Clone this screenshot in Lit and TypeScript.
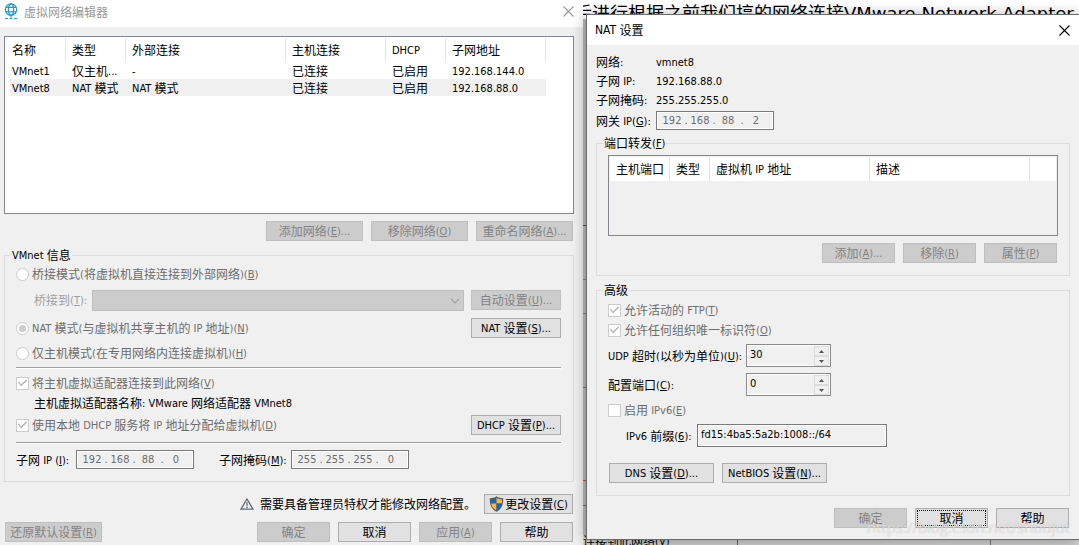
import { LitElement, html, css, nothing, TemplateResult } from "lit";
import { customElement, state } from "lit/decorators.js";

/** Splits a caption into CJK and Latin runs; "&X" marks the access key. */
function caption(text: string): TemplateResult[] {
  const runs = text.match(/[\x20-\x7e]+|[^\x20-\x7e]+/g) ?? [];
  return runs.map((run) => {
    if (!/[\x20-\x7e]/.test(run)) return html`${run}`;
    const at = run.indexOf("&");
    if (at < 0) return html`<span class="latin">${run}</span>`;
    return html`<span class="latin">${run.slice(0, at)}<u>${run[at + 1]}</u>${run.slice(at + 2)}</span>`;
  });
}

interface Network {
  name: string;
  type: string;
  external: string;
  host: string;
  dhcp: string;
  subnet: string;
}

@customElement("app-root")
export class AppRoot extends LitElement {
  @state() private selected = 1;

  private networks: Network[] = [
    { name: "VMnet1", type: "仅主机...", external: "-", host: "已连接", dhcp: "已启用", subnet: "192.168.144.0" },
    { name: "VMnet8", type: "NAT 模式", external: "NAT 模式", host: "已连接", dhcp: "已启用", subnet: "192.168.88.0" },
  ];

  static styles = css`
    :host {
      display: block;
      position: relative;
      overflow: hidden;
      height: 100vh;
      background: #b0b0b0;
      color: #000;
      font: 12px/16px "Noto Sans CJK SC", sans-serif;
    }
    * { box-sizing: border-box; }
    button, input, select { font: inherit; color: inherit; margin: 0; }
    .latin {
      font-family: "DejaVu Sans Condensed", "DejaVu Sans", sans-serif;
      font-size: 11px;
      line-height: 11px;
      vertical-align: 1px;
      white-space: pre;
    }
    u { text-underline-offset: 1px; }

    /* page behind the dialogs */
    .page {
      position: absolute;
      inset: 0;
      display: flex;
      flex-direction: column;
      justify-content: space-between;
      align-items: flex-end;
      overflow: hidden;
      background:
        linear-gradient(#c66, #c66) 0 279px / 100% 1px no-repeat,
        linear-gradient(#c66, #c66) 0 313px / 100% 1px no-repeat,
        linear-gradient(#c44, #c44) 0 480px / 100% 1px no-repeat,
        linear-gradient(#c44, #c44) 0 505px / 100% 1px no-repeat,
        linear-gradient(#555, #555) 0 225px / 100% 1px no-repeat,
        linear-gradient(#777, #777) 0 387px / 100% 1px no-repeat,
        #bbb;
    }
    .page p { margin: 0; white-space: nowrap; overflow: hidden; }
    .headline {
      width: 505px;
      height: 19px;
      background: #fff;
      font-size: 18px;
      line-height: 24px;
    }
    .headline span { font-family: "DejaVu Sans", sans-serif; }
    .tail {
      width: 496px;
      height: 10px;
      line-height: 12px;
      background: linear-gradient(#c33, #c33) 154px 0 / 1px 100% no-repeat,
        linear-gradient(#777, #777) 407px 0 / 1px 100% no-repeat, #d8d8d8;
    }

    .desktop {
      position: relative;
      display: grid;
      grid-template-columns: minmax(0, 1fr) 493px;
      column-gap: 3px;
      align-items: start;
    }
    .window { background: #f0f0f0; }
    .editor { min-height: 100vh; }
    .nat {
      position: relative;
      margin-top: 14px;
      border: 1px solid #6b6b6b;
      border-right: 0;
      box-shadow: 0 2px 14px rgba(0, 0, 0, 0.35);
    }
    .titlebar {
      display: flex;
      align-items: center;
      background: #fff;
      height: 27px;
      padding: 0 9px 4px 4px;
      color: #999;
    }
    .titlebar h1 { flex: 1; margin: 0 0 0 5px; font-size: 12px; font-weight: 400; line-height: 16px; }
    .titlebar .latin { font-size: 12px; }
    .nat .titlebar { height: 30px; padding: 0 9px 0 3px; color: #000; }
    .close { display: block; border: 0; padding: 0; background: none; width: 11px; height: 11px; }
    .close svg, .globe { display: block; }
    .body { padding: 9px 9px 3px 4px; }
    .nat .body { padding: 7px 9px 11px; }

    .list { border: 1px solid #828790; background: #fff; }
    .editor .list { height: 178px; padding: 1px 0 0 5px; }
    .nat .list { height: 81px; padding: 1px; background: none; }
    table { border-collapse: collapse; table-layout: fixed; }
    th, td { padding: 0 0 0 6px; text-align: left; font-weight: 400; white-space: nowrap; overflow: hidden; line-height: 16px; }
    th { height: 24px; box-shadow: inset -1px 0 #e5e5e5; }
    .editor th:first-child, .editor td:first-child { padding-left: 2px; }
    td { height: 17px; }
    .picked td { background: #f0f0f0; }
    .nat table { width: 100%; background: #fff; }
    .nat th:last-child { box-shadow: none; }

    .row { display: flex; align-items: center; }
    .end { justify-content: flex-end; gap: 8px; padding-right: 1px; }
    .push { flex: 1; }
    .btn {
      display: flex;
      align-items: center;
      justify-content: center;
      height: 20px;
      padding: 0;
      border: 1px solid #adadad;
      background: #e1e1e1;
      white-space: nowrap;
    }
    .btn:disabled { background: #ccc; border-color: #bfbfbf; color: #838383; }
    .w73 { width: 73px; }
    .w90 { width: 90px; }
    .w97 { width: 97px; }
    .w105 { width: 105px; }
    .focused { outline: 1px dotted #000; outline-offset: -3px; }
    .toolbar { margin-top: 7px; }

    fieldset { margin: 6px 0 0; padding: 0 11px 12px; border: 1px solid #dcdcdc; min-width: 0; }
    .editor fieldset { padding: 1px 12px 12px 11px; }
    legend { margin-left: -5px; padding: 0 1px; height: 16px; }
    .nat .ports { margin-top: 5px; padding-top: 4px; }

    .option { display: flex; align-items: center; height: 20px; gap: 3px; color: #6d6d6d; white-space: nowrap; }
    .option input {
      appearance: none;
      display: grid;
      place-items: center;
      width: 13px;
      height: 13px;
      border: 1px solid #ccc;
      background: #fff;
    }
    .option input[type="radio"] { border-radius: 50%; }
    .option input[type="radio"]:checked::after { content: ""; width: 7px; height: 7px; border-radius: 50%; background: #ccc; }
    .option input[type="checkbox"]:checked::after {
      content: "";
      width: 11px;
      height: 11px;
      background: #b4b4b4;
      clip-path: polygon(1px 5px, 2px 4px, 4px 7px, 9px 2px, 10px 3px, 4px 9px);
    }
    .bridge { margin: 6px 0 7px; height: 21px; gap: 7px; align-items: flex-start; }
    .bridge label { width: 69px; padding: 2px 0 0 18px; color: #a0a0a0; white-space: nowrap; }
    .combo { position: relative; flex: 1; display: grid; }
    .combo select { appearance: none; height: 21px; border: 1px solid #bfbfbf; border-radius: 0; background: #ccc; opacity: 1; }
    .combo svg { position: absolute; right: 4px; top: 8px; pointer-events: none; }
    .hostonly { margin-top: 5px; }
    hr { margin: 4px 0; height: 2px; border: 0; border-top: 1px solid #a0a0a0; background: #fff; }
    .adapter { margin: 0 0 3px; padding-left: 18px; line-height: 19px; }
    .low { margin: 7px 0 6px; }

    .ip {
      display: flex;
      align-items: center;
      width: 118px;
      height: 19px;
      padding-left: 3px;
      border: 1px solid #7a7a7a;
      box-shadow: inset 0 0 0 1px #fff;
      color: #6d6d6d;
      font-family: "DejaVu Sans Condensed", "DejaVu Sans", sans-serif;
      font-size: 11px;
    }
    .ip input { width: 24px; height: 15px; padding: 0; border: 0; background: none; text-align: center; }
    .ip i { width: 4px; font-style: normal; text-align: center; }
    .addr label { width: 60px; white-space: nowrap; }
    .addr .mask { width: 72px; margin-left: 25px; }

    .notice { margin-top: 12px; padding-right: 1px; justify-content: flex-end; white-space: nowrap; }
    .notice svg { display: block; flex: none; }
    .notice .text { margin: 0 8px 0 6px; }
    .admin { width: 89px; gap: 1px; }
    .bottom { margin-top: 8px; gap: 8px; padding: 0 1px; }

    .info { display: grid; grid-template-columns: 60px 1fr; line-height: 19px; margin: 0 0 2px; }
    .info dd { margin: 0; }
    .gateway label { width: 60px; white-space: nowrap; }
    .advanced .option:first-of-type { margin-top: 2px; }
    .num { height: 23px; margin: 4px 0 6px; }
    .num label { width: 138px; white-space: nowrap; }
    .port { margin: 0 0 4px; }
    .spin { display: flex; width: 85px; height: 23px; border: 1px solid #8a8a8a; box-shadow: inset 0 0 0 1px #fff; }
    .spin input, .prefix input {
      font-family: "DejaVu Sans Condensed", "DejaVu Sans", sans-serif;
      font-size: 11px;
      border: 0;
      background: none;
      padding: 0 0 2px 3px;
      min-width: 0;
    }
    .spin input { flex: 1; width: 0; }
    .arrows { display: grid; grid-template-rows: 10px 10px; width: 16px; padding: 1px 1px 0 0; }
    .arrows button { display: grid; place-items: center; padding: 0; border: 1px solid #dcdcdc; background: #f0f0f0; }
    .arrows svg { display: block; }
    .prefix { margin: 4px 0 16px; height: 23px; }
    .prefix label { width: 89px; padding-left: 18px; white-space: nowrap; }
    .prefix input { width: 190px; height: 23px; border: 1px solid #7a7a7a; box-shadow: inset 0 0 0 1px #fff; }
    .more { gap: 8px; padding-left: 1px; }
    .confirm { margin-top: 12px; }
    .watermark {
      position: absolute;
      right: 9px;
      bottom: 8px;
      font: 15px/20px "Open Sans", sans-serif;
      color: rgba(255, 255, 255, 0.65);
      text-shadow: 0 0 1px rgba(0, 0, 0, 0.25);
      pointer-events: none;
    }
  `;

  private close(color: string, name: string) {
    return html`<button class="close" aria-label=${name}>
      <svg width="11" height="11" viewBox="0 0 11 11" stroke=${color} stroke-width="1.1" fill="none"><path d="M.5.5l10 10M10.5.5l-10 10" /></svg>
    </button>`;
  }

  private button(text: string, cls: string, disabled = false) {
    return html`<button class="btn ${cls}" ?disabled=${disabled}><span>${caption(text)}</span></button>`;
  }

  private ip(id: string, parts: string[]) {
    return html`<div class="ip" role="group">
      ${parts.map(
        (p, i) => html`${i ? html`<i>.</i>` : nothing}<input id=${i ? `${id}-${i}` : id} aria-label=${i ? `${id} ${i + 1}` : nothing} .value=${p} maxlength="3" disabled />`
      )}
    </div>`;
  }

  private option(type: "radio" | "checkbox", text: string, checked: boolean, cls = "") {
    return html`<label class="option ${cls}"><input type=${type} name=${type === "radio" ? "mode" : nothing} .checked=${checked} disabled /><span>${caption(text)}</span></label>`;
  }

  private spin(id: string, value: string) {
    return html`<div class="spin">
      <input id=${id} .value=${value} />
      <div class="arrows">
        <button aria-label="+"><svg width="5" height="3" fill="#555"><path d="M0 3L2.5 0 5 3z" /></svg></button>
        <button aria-label="-"><svg width="5" height="3" fill="#555"><path d="M0 0L2.5 3 5 0z" /></svg></button>
      </div>
    </div>`;
  }

  private editor() {
    return html`<section class="window editor">
      <header class="titlebar">
        <svg class="globe" width="15" height="17" viewBox="0 0 15 17" fill="none" stroke="#1b9bd0" stroke-width="1.2">
          <circle cx="7" cy="6.6" r="5.7" />
          <ellipse cx="7" cy="6.6" rx="2.6" ry="5.7" />
          <path d="M1.8 4.4h10.4M1.8 8.8h10.4M7 12.3v2.2" />
          <path d="M1 15.5h3M5.5 15.5h3M10 15.5h3" stroke="#2aa8a0" />
        </svg>
        <h1>虚拟网络编辑器</h1>
        ${this.close("#999", "关闭")}
      </header>
      <div class="body">
        <div class="list">
          <table>
            <colgroup>
              <col style="width:56px" /><col style="width:60px" /><col style="width:160px" />
              <col style="width:100px" /><col style="width:60px" /><col style="width:100px" />
            </colgroup>
            <thead>
              <tr>${["名称", "类型", "外部连接", "主机连接", "DHCP", "子网地址"].map((h) => html`<th>${caption(h)}</th>`)}</tr>
            </thead>
            <tbody>
              ${this.networks.map(
                (n, i) => html`<tr class=${i === this.selected ? "picked" : ""} @click=${() => (this.selected = i)}>
                  ${[n.name, n.type, n.external, n.host, n.dhcp, n.subnet].map((v) => html`<td>${caption(v)}</td>`)}
                </tr>`
              )}
            </tbody>
          </table>
        </div>
        <div class="row end toolbar">
          ${this.button("添加网络(&E)...", "w97", true)}${this.button("移除网络(&O)", "w97", true)}${this.button("重命名网络(&A)...", "w97", true)}
        </div>
        <fieldset>
          <legend>${caption("VMnet 信息")}</legend>
          ${this.option("radio", "桥接模式(将虚拟机直接连接到外部网络)(&B)", false)}
          <div class="row bridge">
            <label for="bridge">${caption("桥接到(&T):")}</label>
            <div class="combo">
              <select id="bridge" disabled></select>
              <svg width="10" height="6" viewBox="0 0 10 6" fill="none" stroke="#a0a0a0" stroke-width="1.2"><path d="M1 .8l4 4 4-4" /></svg>
            </div>
            ${this.button("自动设置(&U)...", "w90", true)}
          </div>
          <div class="row">
            ${this.option("radio", "NAT 模式(与虚拟机共享主机的 IP 地址)(&N)", true)}
            <span class="push"></span>${this.button("NAT 设置(&S)...", "w90")}
          </div>
          ${this.option("radio", "仅主机模式(在专用网络内连接虚拟机)(&H)", false, "hostonly")}
          <hr />
          ${this.option("checkbox", "将主机虚拟适配器连接到此网络(&V)", true)}
          <p class="adapter">${caption("主机虚拟适配器名称: VMware 网络适配器 VMnet8")}</p>
          <div class="row">
            ${this.option("checkbox", "使用本地 DHCP 服务将 IP 地址分配给虚拟机(&D)", true)}
            <span class="push"></span>${this.button("DHCP 设置(&P)...", "w90")}
          </div>
          <hr class="low" />
          <div class="row addr">
            <label for="subnet">${caption("子网 IP (&I):")}</label>${this.ip("subnet", ["192", "168", "88", "0"])}
            <label class="mask" for="mask">${caption("子网掩码(&M):")}</label>${this.ip("mask", ["255", "255", "255", "0"])}
          </div>
        </fieldset>
        <div class="row notice">
          <svg width="14" height="12" viewBox="0 0 14 12" fill="none" stroke="#5c6c78" stroke-width="1.3">
            <path d="M7 1L13 11.2H1z" /><path d="M7 4.3v3.4M7 8.6v1.3" />
          </svg>
          <span class="text">需要具备管理员特权才能修改网络配置。</span>
          <button class="btn admin">
            <svg width="15" height="16" viewBox="0 0 15 16">
              <path d="M7.5 .3C5.6 1.8 3.4 2.3.8 2.2 .6 8 1.8 13 7.5 15.7 13.2 13 14.4 8 14.2 2.2 11.6 2.3 9.4 1.8 7.5.3z" fill="#555" />
              <path d="M7.5 1.700C5.500 2.900 4 3.300 2 3.300V7.500h5.500z" fill="#1467c4" />
              <path d="M7.500 1.700c2 1.200 3.500 1.600 5.500 1.600V7.500H7.500z" fill="#fdb62f" />
              <path d="M2.100 7.500h5.400v6.900C4.200 12.700 2.600 10.600 2.100 7.500z" fill="#fdb62f" />
              <path d="M12.900 7.500H7.500v6.900c3.300-1.700 4.900-3.800 5.400-6.900z" fill="#1467c4" />
            </svg>
            <span>${caption("更改设置(&C)")}</span>
          </button>
        </div>
        <div class="row bottom">
          ${this.button("还原默认设置(&R)", "w97", true)}<span class="push"></span>
          ${this.button("确定", "w73", true)}${this.button("取消", "w73")}${this.button("应用(&A)", "w73", true)}${this.button("帮助", "w73")}
        </div>
      </div>
    </section>`;
  }

  private nat() {
    return html`<section class="window nat">
      <header class="titlebar"><h1>${caption("NAT 设置")}</h1>${this.close("#000", "关闭")}</header>
      <div class="body">
        <dl class="info">
          <dt>${caption("网络:")}</dt><dd>${caption("vmnet8")}</dd>
          <dt>${caption("子网 IP:")}</dt><dd>${caption("192.168.88.0")}</dd>
          <dt>${caption("子网掩码:")}</dt><dd>${caption("255.255.255.0")}</dd>
        </dl>
        <div class="row gateway">
          <label for="gateway">${caption("网关 IP(&G):")}</label>${this.ip("gateway", ["192", "168", "88", "2"])}
        </div>
        <fieldset class="ports">
          <legend>${caption("端口转发(&F)")}</legend>
          <div class="list">
            <table>
              <colgroup><col style="width:60px" /><col style="width:40px" /><col style="width:160px" /><col style="width:160px" /><col /></colgroup>
              <thead><tr>${["主机端口", "类型", "虚拟机 IP 地址", "描述", ""].map((h) => html`<th>${caption(h)}</th>`)}</tr></thead>
            </table>
          </div>
          <div class="row end toolbar">
            ${this.button("添加(&A)...", "w73", true)}${this.button("移除(&R)", "w73", true)}${this.button("属性(&P)", "w73", true)}
          </div>
        </fieldset>
        <fieldset class="advanced">
          <legend>高级</legend>
          ${this.option("checkbox", "允许活动的 FTP(&T)", true)}
          ${this.option("checkbox", "允许任何组织唯一标识符(&O)", true)}
          <div class="row num"><label for="udp">${caption("UDP 超时(以秒为单位)(&U):")}</label>${this.spin("udp", "30")}</div>
          <div class="row num port"><label for="port">${caption("配置端口(&C):")}</label>${this.spin("port", "0")}</div>
          ${this.option("checkbox", "启用 IPv6(&E)", false)}
          <div class="row prefix"><label for="prefix">${caption("IPv6 前缀(&6):")}</label><input id="prefix" value="fd15:4ba5:5a2b:1008::/64" /></div>
          <div class="row more">${this.button("DNS 设置(&D)...", "w105")}${this.button("NetBIOS 设置(&N)...", "w105")}</div>
        </fieldset>
        <div class="row end confirm">
          ${this.button("确定", "w73", true)}${this.button("取消", "w73 focused")}${this.button("帮助", "w73")}
        </div>
      </div>
    </section>`;
  }

  render() {
    return html`
      <div class="page">
        <p class="headline">后进行根据之前我们搞的网络连接<span>VMware Network Adapter</span></p>
        <p class="tail">${caption("连接到此网络(V)")}</p>
      </div>
      <main class="desktop">${this.editor()}${this.nat()}</main>
      <span class="watermark">https://blog.csdn.net/shoujut</span>
    `;
  }
}
